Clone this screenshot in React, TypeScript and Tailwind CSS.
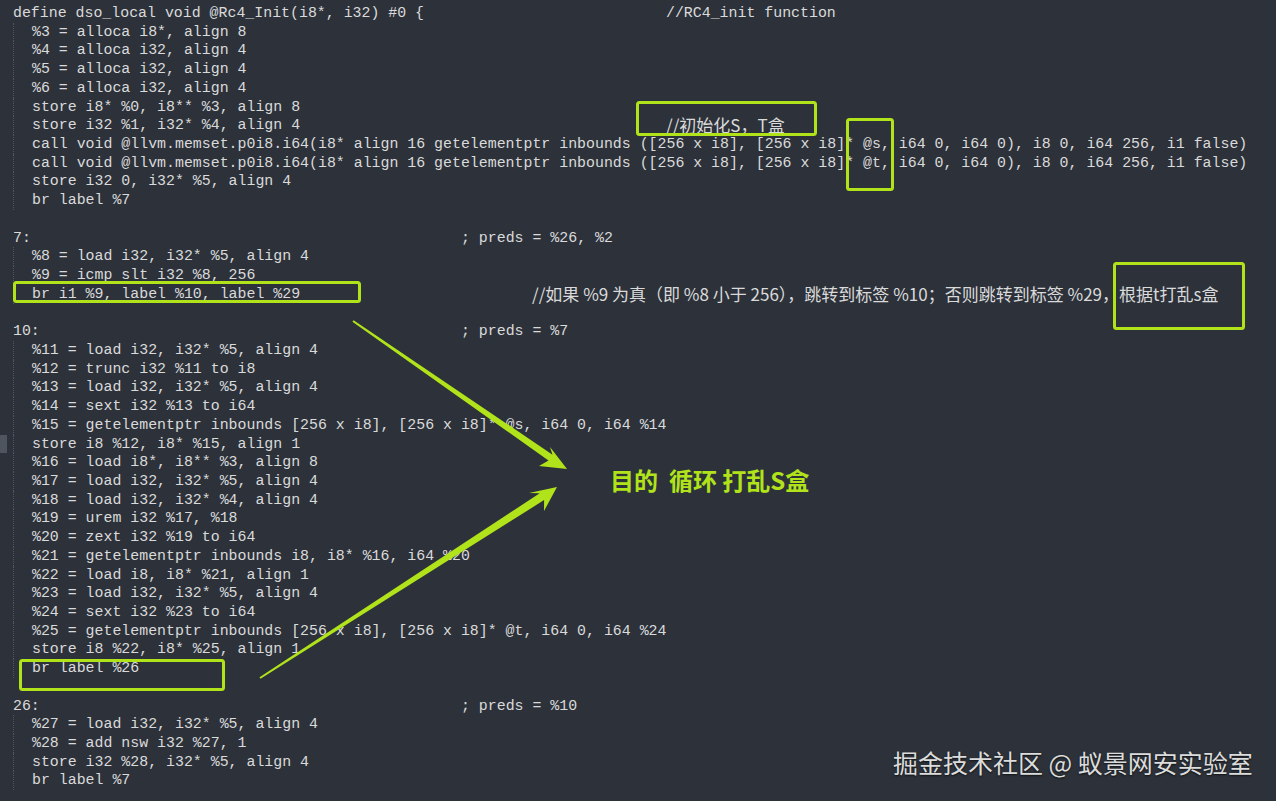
type Line = {
  t: string
  ind?: boolean
  c?: string
  w?: string
  cjk?: boolean
  mark?: boolean
}

const lines: Line[] = [
  { t: 'define dso_local void @Rc4_Init(i8*, i32) #0 {', c: '//RC4_init function', w: 'w-[653px]' },
  { t: '%3 = alloca i8*, align 8', ind: true },
  { t: '%4 = alloca i32, align 4', ind: true },
  { t: '%5 = alloca i32, align 4', ind: true },
  { t: '%6 = alloca i32, align 4', ind: true },
  { t: 'store i8* %0, i8** %3, align 8', ind: true },
  { t: 'store i32 %1, i32* %4, align 4', ind: true, c: '//初始化S，T盒', w: 'w-[634px]', cjk: true },
  { t: 'call void @llvm.memset.p0i8.i64(i8* align 16 getelementptr inbounds ([256 x i8], [256 x i8]* @s, i64 0, i64 0), i8 0, i64 256, i1 false)', ind: true },
  { t: 'call void @llvm.memset.p0i8.i64(i8* align 16 getelementptr inbounds ([256 x i8], [256 x i8]* @t, i64 0, i64 0), i8 0, i64 256, i1 false)', ind: true },
  { t: 'store i32 0, i32* %5, align 4', ind: true },
  { t: 'br label %7', ind: true },
  { t: '' },
  { t: '7:', c: '; preds = %26, %2', w: 'w-[448px]' },
  { t: '%8 = load i32, i32* %5, align 4', ind: true },
  { t: '%9 = icmp slt i32 %8, 256', ind: true },
  { t: 'br i1 %9, label %10, label %29', ind: true, c: '//如果 %9 为真（即 %8 小于 256），跳转到标签 %10；否则跳转到标签 %29，根据t打乱s盒', w: 'w-[500px]', cjk: true },
  { t: '' },
  { t: '10:', c: '; preds = %7', w: 'w-[448px]' },
  { t: '%11 = load i32, i32* %5, align 4', ind: true },
  { t: '%12 = trunc i32 %11 to i8', ind: true },
  { t: '%13 = load i32, i32* %5, align 4', ind: true },
  { t: '%14 = sext i32 %13 to i64', ind: true },
  { t: '%15 = getelementptr inbounds [256 x i8], [256 x i8]* @s, i64 0, i64 %14', ind: true },
  { t: 'store i8 %12, i8* %15, align 1', ind: true, mark: true },
  { t: '%16 = load i8*, i8** %3, align 8', ind: true },
  { t: '%17 = load i32, i32* %5, align 4', ind: true },
  { t: '%18 = load i32, i32* %4, align 4', ind: true },
  { t: '%19 = urem i32 %17, %18', ind: true },
  { t: '%20 = zext i32 %19 to i64', ind: true },
  { t: '%21 = getelementptr inbounds i8, i8* %16, i64 %20', ind: true },
  { t: '%22 = load i8, i8* %21, align 1', ind: true },
  { t: '%23 = load i32, i32* %5, align 4', ind: true },
  { t: '%24 = sext i32 %23 to i64', ind: true },
  { t: '%25 = getelementptr inbounds [256 x i8], [256 x i8]* @t, i64 0, i64 %24', ind: true },
  { t: 'store i8 %22, i8* %25, align 1', ind: true },
  { t: 'br label %26', ind: true },
  { t: '' },
  { t: '26:', c: '; preds = %10', w: 'w-[448px]' },
  { t: '%27 = load i32, i32* %5, align 4', ind: true },
  { t: '%28 = add nsw i32 %27, 1', ind: true },
  { t: 'store i32 %28, i32* %5, align 4', ind: true },
  { t: 'br label %7', ind: true },
]

const GREEN = '#b1e31b'

const CodeLine = ({ line }: { line: Line }) => {
  const body = (
    <>
      {line.c ? (
        <>
          <span className={`inline-block align-top ${line.w}`}>{line.t}</span>
          <span
            className={
              line.cjk
                ? "inline-block align-top h-[18.73px] leading-[18.73px] font-['Noto_Sans_CJK_SC',sans-serif] text-[17px]"
                : 'inline-block align-top'
            }
          >
            {line.c}
          </span>
        </>
      ) : (
        line.t
      )}
    </>
  )
  return (
    <div className="flex h-[18.73px] overflow-visible">
      <div className="w-[13px] shrink-0">
        {line.mark && <div className="w-[7px] h-full bg-[#4f555e]" />}
      </div>
      {line.ind ? (
        <div className="h-[18.73px] border-l border-dotted border-[#50565f] pl-[18px] whitespace-pre">
          {body}
        </div>
      ) : (
        <div className="h-[18.73px] whitespace-pre">{body}</div>
      )}
    </div>
  )
}

export default function App() {
  return (
    <div className="relative w-[1276px] h-[801px] overflow-hidden bg-[#2d323a] text-[#dadada] font-['Liberation_Mono',monospace] text-[14.9px] leading-[18.73px] pt-[4px]">
      {lines.map((l, i) => (
        <CodeLine key={i} line={l} />
      ))}

      {/* annotations */}
      <svg
        className="absolute inset-0 pointer-events-none"
        width="1276"
        height="801"
        viewBox="0 0 1276 801"
      >
        <g fill="none" stroke={GREEN} strokeWidth="3">
          <rect x="637.5" y="102.5" width="178" height="32" rx="2" />
          <rect x="847.5" y="119.5" width="45" height="70" rx="2" />
          <rect x="14.5" y="282.5" width="345" height="19" rx="2" />
          <rect x="1114.5" y="263.5" width="129" height="65" rx="2" />
          <rect x="20.5" y="660.5" width="203" height="29" rx="2" />
        </g>
        <polygon
          fill={GREEN}
          points="352.4,321.8 548.5,460.5 539,466 567,469 550,447 552.5,454.7 353.6,320.2"
        />
        <polygon
          fill={GREEN}
          points="260.5,678.8 544.1,500.1 544,511 557,487 529,493 539.7,493.3 259.5,677.2"
        />
      </svg>

      <div className="absolute left-[610px] top-[468px] font-['Noto_Sans_CJK_SC',sans-serif] font-bold text-[24px] leading-none text-[#b1e31b] whitespace-pre">
        目的  循环 打乱S盒
      </div>

      <div className="absolute left-[893px] top-[750px] font-['Noto_Sans_CJK_SC',sans-serif] text-[25px] leading-none text-[#dcdcdc] whitespace-pre [text-shadow:0_1px_2px_rgba(0,0,0,0.7)]">
        掘金技术社区 @ 蚁景网安实验室
      </div>
    </div>
  )
}
